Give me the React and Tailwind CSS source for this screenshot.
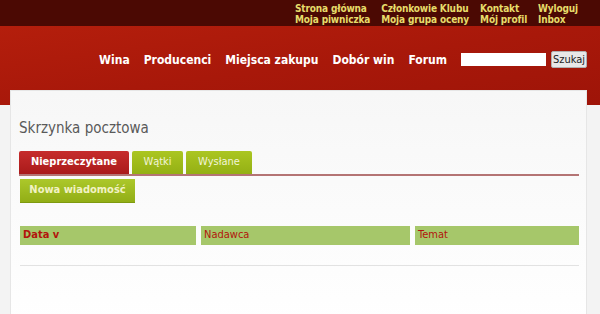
import React from "react";

const topLinks = [
  ["Strona główna", "Moja piwniczka"],
  ["Członkowie Klubu", "Moja grupa oceny"],
  ["Kontakt", "Mój profil"],
  ["Wyloguj", "Inbox"],
];

const navLinks = ["Wina", "Producenci", "Miejsca zakupu", "Dobór win", "Forum"];

export default function App() {
  return (
    <div className="w-[600px] h-[314px] overflow-hidden bg-[#f3f3f3] font-['DejaVu_Sans_Condensed','Liberation_Sans',sans-serif]">
      {/* top bar */}
      <div className="h-[26px] bg-[#4b0903] flex justify-end pr-[22px] pt-[3px]">
        <div className="flex gap-[11px] text-[10px] leading-[11px] font-bold tracking-[-0.15px] text-[#e6dc6a]">
          {topLinks.map((col) => (
            <div key={col[0]} className="flex flex-col">
              <span>{col[0]}</span>
              <span>{col[1]}</span>
            </div>
          ))}
        </div>
      </div>

      {/* red header */}
      <div className="h-[79px] bg-gradient-to-br from-[#b41e0c] via-[#a8180a] to-[#9e1408] flex justify-end pr-[13px] pt-[24px]">
        <div className="flex items-start h-[20px]">
          <nav className="flex gap-[14px] text-[12px] font-bold text-white mr-[14px] mt-[1px]">
            {navLinks.map((l) => (
              <span key={l}>{l}</span>
            ))}
          </nav>
          <input className="w-[85px] h-[13px] bg-white mt-[3px] mr-[5px] outline-none" />
          <button className="h-[17px] w-[36px] bg-[#e8e8e8] border border-[#b0b0b0] rounded-[2px] text-[11px] leading-[14px] text-[#222] mt-[1px]">
            Szukaj
          </button>
        </div>
      </div>

      {/* content box */}
      <div className="relative -mt-[15px] ml-[10px] w-[577px] h-[240px] bg-gradient-to-b from-[#f7f7f7] to-white border border-[#e6e6e6] pl-[8px] pr-[7px]">
        <h1 className="pt-[28px] text-[15px] leading-[18px] text-[#5a5a5a]">Skrzynka pocztowa</h1>

        <div className="mt-[14px] flex gap-[3px] border-b-[2px] border-[#b47474]">
          <div className="h-[23px] w-[110px] bg-gradient-to-b from-[#c62c2c] to-[#aa1a1a] text-white font-bold text-[11px] flex items-center justify-center rounded-t-[2px]">
            Nieprzeczytane
          </div>
          <div className="h-[23px] w-[51px] bg-gradient-to-b from-[#abc621] to-[#94b014] text-[#f2f4d8] text-[11px] flex items-center justify-center rounded-t-[2px]">
            Wątki
          </div>
          <div className="h-[23px] w-[66px] bg-gradient-to-b from-[#abc621] to-[#94b014] text-[#f2f4d8] text-[11px] flex items-center justify-center rounded-t-[2px]">
            Wysłane
          </div>
        </div>

        <button className="mt-[3px] ml-[1px] h-[24px] w-[115px] bg-gradient-to-b from-[#acc82a] to-[#92ae16] border-b border-[#7e9a10] text-[#f2f2c4] font-bold text-[11px] flex items-center justify-center">
          Nowa wiadomość
        </button>

        <div className="mt-[23px] ml-[1px] grid grid-cols-[176px_209px_1fr] gap-x-[5px] border-b border-[#e2e2e2]">
          <div className="h-[19px] bg-[#a6c76a] text-[#b2150c] font-bold text-[11px] flex items-center pl-[3px]">
            Data v
          </div>
          <div className="h-[19px] bg-[#a6c76a] text-[#b2150c] text-[11px] flex items-center pl-[3px]">
            Nadawca
          </div>
          <div className="h-[19px] bg-[#a6c76a] text-[#b2150c] text-[11px] flex items-center pl-[3px]">
            Temat
          </div>
          <div className="h-[20px] col-span-3" />
        </div>
      </div>
    </div>
  );
}
